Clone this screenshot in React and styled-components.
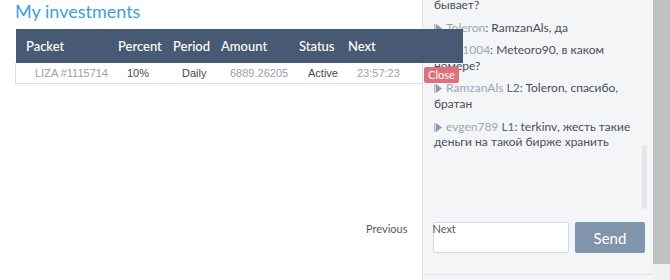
import React from "react";
import styled, { createGlobalStyle } from "styled-components";

const GlobalStyle = createGlobalStyle`
  html, body {
    margin: 0;
    padding: 0;
    background: #ffffff;
    font-family: Lato, "Noto Sans", Arial, sans-serif;
    overflow: hidden;
  }
`;

const Page = styled.div`
  display: flex;
  width: 670px;
  height: 280px;
  overflow: hidden;
`;

const Main = styled.div`
  flex: 1;
  display: flex;
  flex-direction: column;
  padding-left: 15px;
  min-width: 0;
`;

const Title = styled.h2`
  margin: 0 0 7px 0;
  font-size: 18px;
  line-height: 22px;
  font-weight: 400;
  color: #3a9fe2;
`;

const Table = styled.div`
  width: 407px;
`;

const Grid = styled.div`
  display: grid;
  grid-template-columns: 92px 55px 48px 78px 49px 76px auto;
  align-items: center;
`;

const HeadRow = styled(Grid)`
  position: relative;
  z-index: 2;
  margin-left: 1px;
  width: 447px;
  height: 34px;
  background: #485a73;
`;

const HeadCell = styled.div`
  padding-left: 10px;
  color: #ffffff;
  font-size: 13px;
  font-weight: 500;
  white-space: nowrap;
`;

const BodyRow = styled(Grid)`
  height: 20px;
  border-left: 1px solid #dddddd;
  border-bottom: 1px solid #dddddd;
`;

const BodyCell = styled.div`
  padding-left: 19px;
  font-family: "Liberation Sans", Arial, sans-serif;
  font-size: 11px;
  white-space: nowrap;
  color: ${(p) => (p.$muted ? "#9aa0ae" : "#444a52")};
`;

const CloseCell = styled.div`
  padding-left: 10px;
  position: relative;
  z-index: 2;
`;

const CloseButton = styled.button`
  width: 35px;
  height: 16px;
  padding: 0;
  border: none;
  border-radius: 2px;
  background: #e0707a;
  color: #ffffff;
  font-family: Lato, sans-serif;
  font-size: 11px;
  line-height: 16px;
  cursor: pointer;
`;

const Pager = styled.div`
  display: flex;
  gap: 25px;
  margin-top: 138px;
  margin-left: 351px;
  font-size: 11px;
  line-height: 14px;
  color: #555a60;
`;

const PageLink = styled.span`
  position: relative;
  z-index: 2;
  white-space: nowrap;
`;

const Chat = styled.div`
  position: relative;
  z-index: 1;
  width: 230px;
  flex-shrink: 0;
  display: flex;
  flex-direction: column;
  background: #f4f5f7;
  border-left: 1px solid #dde0e5;
`;

const Messages = styled.div`
  position: relative;
  height: 215px;
  overflow: hidden;
  padding: 0 15px 0 11px;
`;

const MessageList = styled.div`
  margin-top: -3px;
`;

const Msg = styled.p`
  margin: 0 0 7px 0;
  font-size: 12px;
  line-height: 15.6px;
  color: #4b4d58;
`;

const Nick = styled.span`
  color: #9ba6b6;
`;

const Level = styled.span`
  color: #56687a;
`;

const Arrow = styled.svg`
  width: 8px;
  height: 9px;
  margin-right: 4px;
  vertical-align: -1px;
`;

const Thumb = styled.div`
  position: absolute;
  right: 6px;
  top: 145px;
  width: 5px;
  height: 64px;
  border-radius: 3px;
  background: #e4e6ea;
`;

const Composer = styled.div`
  display: flex;
  gap: 6px;
  padding: 7px 7px 0 10px;
  height: 52px;
  border-bottom: 1px solid #dfe2e6;
`;

const Input = styled.div`
  width: 134px;
  height: 29px;
  background: #ffffff;
  border: 1px solid #d3d9e2;
  border-radius: 2px;
`;

const SendButton = styled.button`
  width: 70px;
  height: 31px;
  border: none;
  border-radius: 2px;
  background: #8094ac;
  color: #ffffff;
  font-family: Lato, sans-serif;
  font-size: 15px;
  cursor: pointer;
`;

const Scrollbar = styled.div`
  width: 17px;
  flex-shrink: 0;
  background: #f1f1f1;
`;

const ScrollThumb = styled.div`
  height: 264px;
  background: #c1c1c1;
`;

function ArrowIcon() {
  return (
    <Arrow viewBox="0 0 8 9">
      <rect x="0" y="0" width="1.6" height="9" fill="#b3bfcf" />
      <polygon points="2,0 8,4.5 2,9" fill="#8a9bb2" />
    </Arrow>
  );
}

const messages = [
  { name: "rus1004", text: "Meteoro90, в каком номере?" },
  { name: "RamzanAls", level: "L2", text: "Toleron, спасибо, братан" },
  { name: "evgen789", level: "L1", text: "terkinv, жесть такие деньги на такой бирже хранить" },
];

const columns = ["Packet", "Percent", "Period", "Amount", "Status", "Next"];

export default function App() {
  return (
    <>
      <GlobalStyle />
      <Page>
        <Main>
          <Title>My investments</Title>
          <Table>
            <HeadRow>
              {columns.map((c) => (
                <HeadCell key={c}>{c}</HeadCell>
              ))}
            </HeadRow>
            <BodyRow>
              <BodyCell $muted>LIZA #1115714</BodyCell>
              <BodyCell>10%</BodyCell>
              <BodyCell>Daily</BodyCell>
              <BodyCell $muted>6889.26205</BodyCell>
              <BodyCell>Active</BodyCell>
              <BodyCell $muted>23:57:23</BodyCell>
              <CloseCell>
                <CloseButton>Close</CloseButton>
              </CloseCell>
            </BodyRow>
          </Table>
          <Pager>
            <PageLink>Previous</PageLink>
            <PageLink>Next</PageLink>
          </Pager>
        </Main>
        <Chat>
          <Messages>
            <MessageList>
              <Msg>бывает?</Msg>
              <Msg>
                <ArrowIcon />
                <Nick>Toleron</Nick>: RamzanAls, да
              </Msg>
              {messages.map((m) => (
                <Msg key={m.name}>
                  <ArrowIcon />
                  <Nick>{m.name}</Nick>
                  {m.level && <Level> {m.level}</Level>}: {m.text}
                </Msg>
              ))}
            </MessageList>
            <Thumb />
          </Messages>
          <Composer>
            <Input />
            <SendButton>Send</SendButton>
          </Composer>
        </Chat>
        <Scrollbar>
          <ScrollThumb />
        </Scrollbar>
      </Page>
    </>
  );
}
